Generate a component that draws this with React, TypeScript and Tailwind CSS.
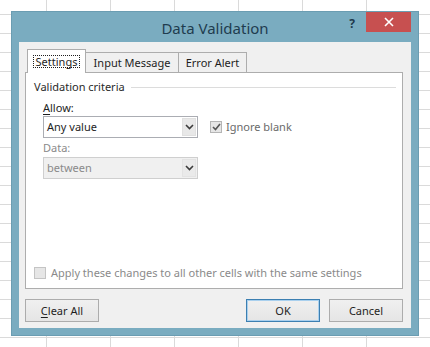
import React from "react";

const font = { fontFamily: '"Noto Sans", "Open Sans", sans-serif' };

function Chevron() {
  return (
    <svg width="9" height="6" viewBox="0 0 9 6" className="block">
      <path d="M1 1 L4.5 4.5 L8 1" fill="none" stroke="#3c3c3c" strokeWidth="1.6" />
    </svg>
  );
}

function Select({ value, disabled }: { value: string; disabled?: boolean }) {
  return (
    <div
      className={
        "flex h-[22px] w-[155px] items-stretch border " +
        (disabled ? "border-[#cfcfcf] bg-[#f0f0f0] text-[#8a8a8a]" : "border-[#abadb3] bg-white text-[#1e1e1e]")
      }
    >
      <div className="flex flex-1 items-center pl-[3px]">{value}</div>
      <div
        className={
          "m-px flex w-[14px] items-center justify-center border " +
          (disabled ? "border-[#e3e3e3] bg-[#eaeaea]" : "border-[#e0e0e0] bg-[#e8e8e8]")
        }
      >
        <Chevron />
      </div>
    </div>
  );
}

function Button({ children, primary }: { children: React.ReactNode; primary?: boolean }) {
  return (
    <div
      className={
        "flex h-[23px] w-[74px] items-center justify-center border bg-[linear-gradient(#f0f0f0,#e5e5e5)] text-[#1e1e1e] " +
        (primary ? "border-[#3c7fb1] shadow-[inset_0_0_0_1px_#a9d0ee]" : "border-[#acacac]")
      }
    >
      {children}
    </div>
  );
}

export default function App() {
  return (
    <div
      className="h-[347px] w-[430px] overflow-hidden bg-white bg-[linear-gradient(to_right,#dadada_1px,transparent_1px),linear-gradient(to_bottom,#dadada_1px,transparent_1px)] bg-[length:64px_19px] bg-[position:46px_14px] pl-[11px] pt-[11px] text-[11px] leading-[16px]"
      style={font}
    >
      <div className="flex h-[325px] w-[408px] flex-col border border-[#6b9db2] bg-[#7aacc0] px-[7px] pb-[7px]">
        {/* title bar */}
        <div className="grid h-[30px] grid-cols-[1fr_auto_1fr]">
          <div />
          <div className="self-center pt-[2px] text-[15px] leading-[20px] text-[#1f3c4f]">Data Validation</div>
          <div className="flex items-start justify-end">
            <div className="mr-[11px] mt-[4px] text-[12px] font-bold text-[#1f3a4c]">?</div>
            <div className="flex h-[20px] w-[45px] items-center justify-center bg-[#c75050]">
              <svg width="10" height="10" viewBox="0 0 10 10">
                <path d="M1 1 L9 9 M9 1 L1 9" stroke="#ffffff" strokeWidth="1.6" />
              </svg>
            </div>
          </div>
        </div>

        {/* client area */}
        <div className="flex flex-1 flex-col bg-[#f0f0f0] pl-[6px] pr-[8px] pt-[7px]">
          {/* tabs */}
          <div className="flex h-[23px] items-end pl-[2px]">
            <div className="relative z-10 -mb-px flex h-[24px] w-[59px] items-center justify-center border border-b-0 border-[#adadad] bg-white">
              <span className="border border-dotted border-[#1e1e1e] px-[2px] leading-[11px] text-[#1e1e1e]">
                Settings
              </span>
            </div>
            <div className="flex h-[20px] w-[93px] items-center justify-center border border-b-0 border-l-0 border-[#adadad] bg-[#f0f0f0] text-[#1e1e1e]">
              Input Message
            </div>
            <div className="flex h-[20px] w-[68px] items-center justify-center border border-b-0 border-l-0 border-[#adadad] bg-[#f0f0f0] text-[#1e1e1e]">
              Error Alert
            </div>
          </div>

          {/* panel */}
          <div className="flex h-[217px] flex-col border border-[#adadad] bg-white pl-[8px] pr-[6px] pt-[6px] text-[#1e1e1e]">
            <div className="flex items-center gap-[6px]">
              <span className="text-[#2a2a2a]">Validation criteria</span>
              <div className="h-px flex-1 bg-[#dcdcdc]" />
            </div>

            <div className="mt-[5px] pl-[9px]">
              <div>
                <span className="underline underline-offset-2">A</span>llow:
              </div>
              <div className="flex items-center">
                <Select value="Any value" />
                <div className="ml-[12px] flex items-center gap-[4px] text-[#6a6a6a]">
                  <div className="flex h-[12px] w-[12px] items-center justify-center border border-[#b5b5b5] bg-[#e6e6e6]">
                    <svg width="9" height="8" viewBox="0 0 9 8">
                      <path d="M1 4 L3.5 6.5 L8 1" fill="none" stroke="#555555" strokeWidth="1.6" />
                    </svg>
                  </div>
                  <span>Ignore blank</span>
                </div>
              </div>
              <div className="mt-[2px] text-[#8a8a8a]">Data:</div>
              <div className="mt-px">
                <Select value="between" disabled />
              </div>
            </div>

            <div className="mt-auto mb-[7px] flex items-center gap-[5px] text-[#8a8a8a]">
              <div className="h-[12px] w-[12px] border border-[#c4c4c4] bg-[#e6e6e6]" />
              <span>Apply these changes to all other cells with the same settings</span>
            </div>
          </div>

          {/* buttons */}
          <div className="mt-[10px] flex items-center">
            <Button>
              <span>
                <span className="underline underline-offset-2">C</span>lear All
              </span>
            </Button>
            <div className="flex-1" />
            <Button primary>OK</Button>
            <div className="w-[9px]" />
            <Button>Cancel</Button>
          </div>
        </div>
      </div>
    </div>
  );
}
